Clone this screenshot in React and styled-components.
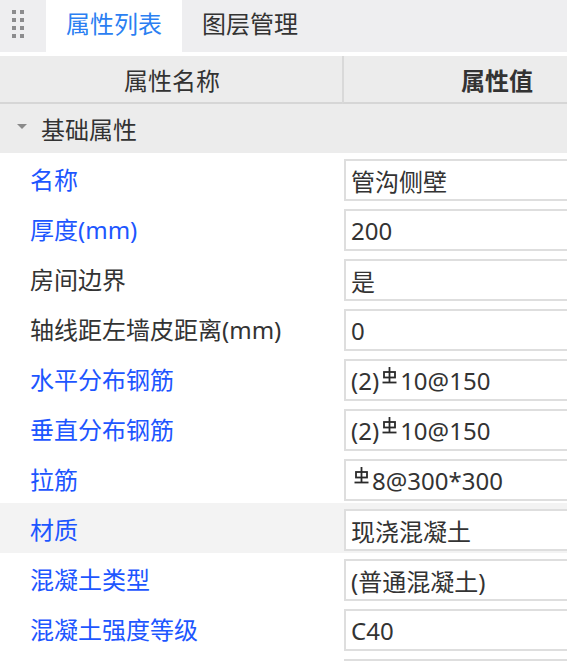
import React from "react";
import styled, { createGlobalStyle } from "styled-components";

const GlobalStyle = createGlobalStyle`
  html, body {
    margin: 0;
    padding: 0;
    background: #ffffff;
  }
  body {
    font-family: "Noto Sans", "Noto Sans CJK SC", sans-serif;
    font-size: 24px;
    color: #333333;
  }
`;

const Panel = styled.div`
  width: 567px;
  height: 661px;
  overflow: hidden;
  background: #ffffff;
`;

const TabBar = styled.div`
  display: flex;
  align-items: stretch;
  height: 52px;
  margin-bottom: 4px;
  background: #eeeef0;
`;

const Grip = styled.div`
  width: 46px;
  display: grid;
  grid-template-columns: repeat(2, 4px);
  grid-auto-rows: 4px;
  column-gap: 4px;
  row-gap: 4px;
  align-content: start;
  padding: 10px 0 0 12px;
  box-sizing: border-box;

  span {
    background: #8c8c8e;
  }
`;

const Tab = styled.div`
  width: 136px;
  display: flex;
  align-items: center;
  justify-content: center;
  line-height: 1;
  padding-bottom: 4px;
  box-sizing: border-box;
  background: ${(p) => (p.$active ? "#ffffff" : "transparent")};
  color: ${(p) => (p.$active ? "#2b7ff2" : "#333333")};
`;

const Table = styled.div`
  width: 650px;
  display: grid;
  grid-template-columns: 344px 306px;
`;

const HeadCell = styled.div`
  height: 46px;
  display: flex;
  align-items: center;
  justify-content: center;
  background: #ececec;
  border-bottom: 2px solid #d6d6d6;
  border-left: ${(p) => (p.$divider ? "2px solid #d9d9d9" : "none")};
  margin-left: ${(p) => (p.$divider ? "-2px" : "0")};
  font-weight: ${(p) => (p.$bold ? 600 : 400)};
  color: #333333;
`;

const GroupRow = styled.div`
  grid-column: 1 / -1;
  height: 49px;
  display: flex;
  align-items: center;
  gap: 14px;
  padding-left: 17px;
  background: #ececec;
  color: #333333;
`;

const Caret = styled.span`
  width: 0;
  height: 0;
  border-left: 5px solid transparent;
  border-right: 5px solid transparent;
  border-top: 5px solid #8a8a8a;
  margin-top: -4px;
`;

const Row = styled.div`
  grid-column: 1 / -1;
  display: grid;
  grid-template-columns: subgrid;
  height: 50px;
  background: ${(p) => (p.$selected ? "#f3f3f3" : "#ffffff")};
`;

const Label = styled.div`
  display: flex;
  align-items: center;
  padding-left: 30px;
  padding-top: 1px;
  white-space: nowrap;
  color: ${(p) => (p.$link ? "#1d56ff" : "#333333")};
`;

const ValueCell = styled.div`
  padding: 6px 0 2px 0;
`;

const ValueBox = styled.div`
  height: 42px;
  box-sizing: border-box;
  border: 2px solid #dedede;
  background: #ffffff;
  display: flex;
  align-items: center;
  padding: 0 0 0 5px;
  white-space: nowrap;
  color: #333333;
`;

const Steel = styled.svg`
  width: 15px;
  height: 17px;
  margin: -9px 3px 0 3px;
  flex: none;
`;

function SteelMark() {
  return (
    <Steel viewBox="0 0 15 17">
      <g stroke="#2a2a2a" strokeWidth="1.8" fill="none">
        <line x1="7.5" y1="0" x2="7.5" y2="15" />
        <rect x="2" y="5" width="11" height="5.5" />
        <line x1="0.5" y1="15.5" x2="14.5" y2="15.5" />
      </g>
    </Steel>
  );
}

const rows = [
  { label: "名称", value: "管沟侧壁", link: true },
  { label: "厚度(mm)", value: "200", link: true },
  { label: "房间边界", value: "是" },
  { label: "轴线距左墙皮距离(mm)", value: "0" },
  { label: "水平分布钢筋", value: ["(2)", "steel", "10@150"], link: true },
  { label: "垂直分布钢筋", value: ["(2)", "steel", "10@150"], link: true },
  { label: "拉筋", value: ["steel", "8@300*300"], link: true },
  { label: "材质", value: "现浇混凝土", link: true, selected: true },
  { label: "混凝土类型", value: "(普通混凝土)", link: true },
  { label: "混凝土强度等级", value: "C40", link: true },
  { label: "", value: "" },
];

function renderValue(value) {
  if (!Array.isArray(value)) return value;
  return value.map((part, i) =>
    part === "steel" ? <SteelMark key={i} /> : <span key={i}>{part}</span>
  );
}

export default function App() {
  return (
    <Panel>
      <GlobalStyle />
      <TabBar>
        <Grip>
          {Array.from({ length: 8 }).map((_, i) => (
            <span key={i} />
          ))}
        </Grip>
        <Tab $active>属性列表</Tab>
        <Tab>图层管理</Tab>
      </TabBar>

      <Table>
        <HeadCell>属性名称</HeadCell>
        <HeadCell $divider $bold>
          属性值
        </HeadCell>

        <GroupRow>
          <Caret />
          基础属性
        </GroupRow>

        {rows.map((row, idx) => (
          <Row key={idx} $selected={row.selected}>
            <Label $link={row.link}>{row.label}</Label>
            <ValueCell>
              <ValueBox>{renderValue(row.value)}</ValueBox>
            </ValueCell>
          </Row>
        ))}
      </Table>
    </Panel>
  );
}
